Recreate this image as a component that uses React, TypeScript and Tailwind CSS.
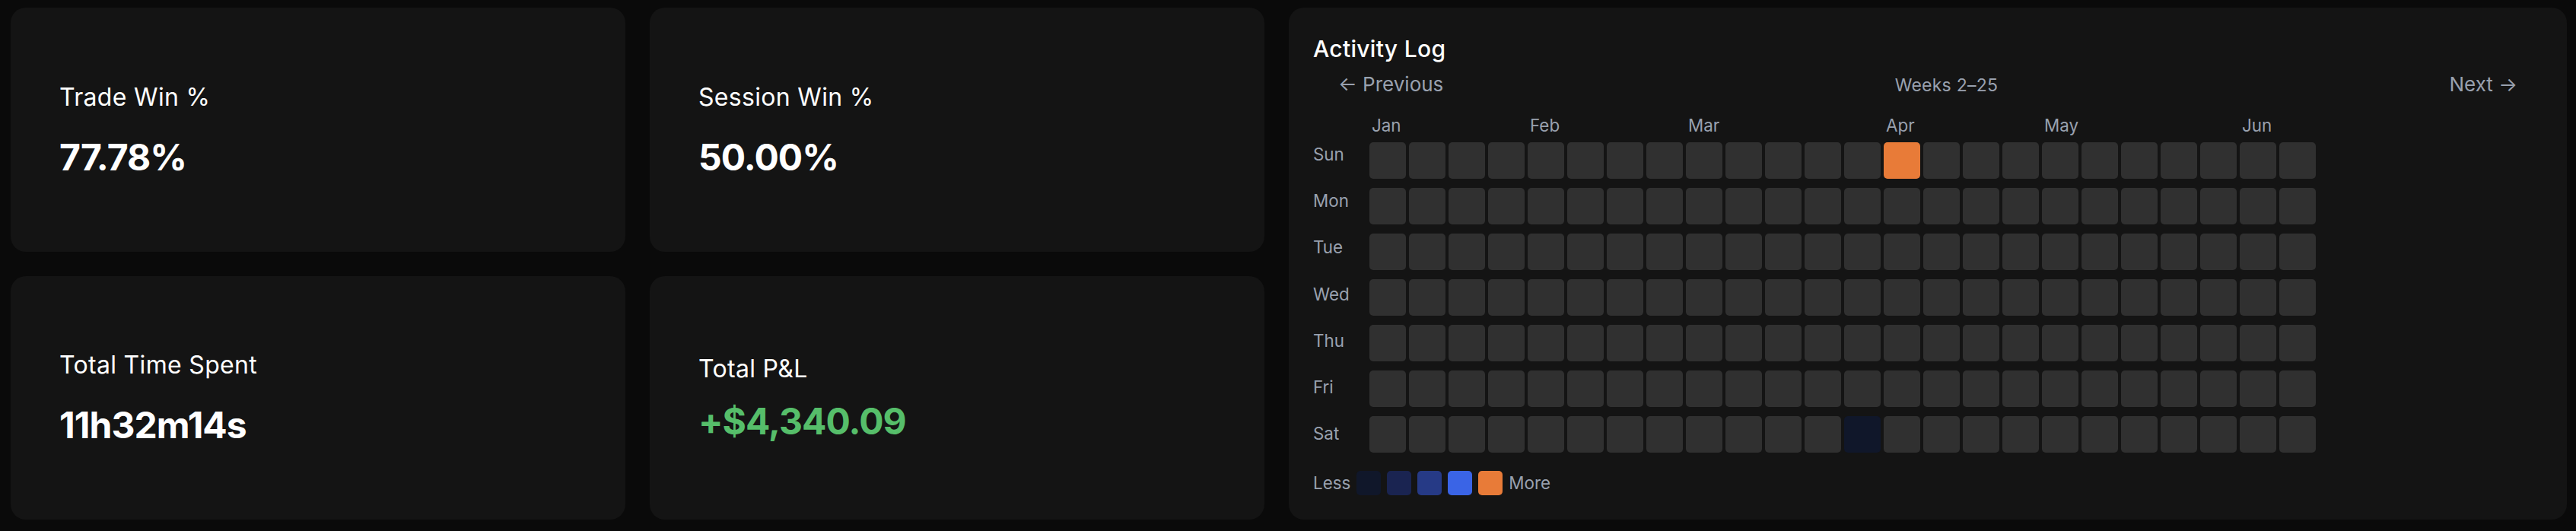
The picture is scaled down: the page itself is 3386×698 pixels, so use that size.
import React from "react";
import clsx from "clsx";

const WEEKS = Array.from({ length: 24 }, (_, i) => i + 2);
const DAYS = ["Sun", "Mon", "Tue", "Wed", "Thu", "Fri", "Sat"];

const MONTHS = [
  { label: "Jan", className: "col-start-1" },
  { label: "Feb", className: "col-start-5" },
  { label: "Mar", className: "col-start-9" },
  { label: "Apr", className: "col-start-14" },
  { label: "May", className: "col-start-18" },
  { label: "Jun", className: "col-start-23" },
];

const LEVELS = [
  "bg-[#10172a]",
  "bg-[#1a2451]",
  "bg-[#263a86]",
  "bg-[#3a64e6]",
  "bg-[#e87b38]",
];

// day index - week index -> level
const ACTIVITY: Record<string, number> = { "0-13": 4, "6-12": 0 };

const StatCard = ({
  title,
  value,
  valueClass,
  tight,
}: {
  title: string;
  value: string;
  valueClass?: string;
  tight?: boolean;
}) => {
  return (
    <div className="flex flex-col justify-center rounded-[20px] bg-[#141414] px-16">
      <h3 className="text-[32px] leading-[45px] font-normal tracking-[0.01em] text-white">{title}</h3>
      <p
        className={clsx(
          "text-[48px] leading-[58px] font-bold tracking-[-0.02em]",
          tight ? "mt-[18px]" : "mt-[28px]",
          valueClass ?? "text-white"
        )}
      >
        {value}
      </p>
    </div>
  );
};

const ActivityLog = () => {
  return (
    <div className="flex-1 rounded-[20px] bg-[#141414] p-8">
      <h2 className="text-[30px] leading-[45px] font-medium tracking-[0.01em] text-white">Activity Log</h2>
      <div className="mt-[5px] flex items-baseline justify-between px-[33px] text-gray-400">
        <button className="text-[26px] leading-[38px]">← Previous</button>
        <span className="text-[23px] leading-[38px] tracking-[0.01em]">Weeks 2–25</span>
        <button className="text-[26px] leading-[38px]">Next →</button>
      </div>

      <div className="mt-[18px] flex">
        <div className="w-[74px] shrink-0" />
        <div className="grid grid-cols-[repeat(24,48px)] gap-x-[4px] text-[22.4px] leading-[32px] text-gray-400">
          {MONTHS.map((m) => (
            <span key={m.label} className={clsx("col-span-4 whitespace-nowrap pl-[3px]", m.className)}>
              {m.label}
            </span>
          ))}
        </div>
      </div>

      <div className="mt-[6px] flex">
        <div className="flex w-[74px] shrink-0 flex-col gap-y-[29.2px] text-[22.4px] leading-[32px] text-gray-400">
          {DAYS.map((day) => (
            <span key={day}>{day}</span>
          ))}
        </div>
        <div className="flex flex-col gap-y-[12px]">
          {DAYS.map((day, di) => (
            <div key={day} className="flex gap-x-[4px]">
              {WEEKS.map((week, wi) => {
                const level = ACTIVITY[`${di}-${wi}`];
                return (
                  <div
                    key={week}
                    className={clsx(
                      "h-[48px] w-[48px] rounded-[5px]",
                      level === undefined ? "bg-[#303030]" : LEVELS[level]
                    )}
                  />
                );
              })}
            </div>
          ))}
        </div>
      </div>

      <div className="mt-[24px] flex items-center gap-[8px] text-[22.4px] leading-[32px] text-gray-400">
        <span>Less</span>
        {LEVELS.map((c) => (
          <div key={c} className={clsx("h-[32px] w-[32px] rounded-[5px]", c)} />
        ))}
        <span>More</span>
      </div>
    </div>
  );
};

export default function App() {
  return (
    <div className="min-h-screen bg-[#0a0a0a] pt-[10px] pr-[12px] pb-[15px] pl-[14px] font-[Inter,sans-serif]">
      <div className="flex gap-8">
        <div className="grid w-[1648px] shrink-0 grid-cols-2 grid-rows-2 gap-8">
          <StatCard title="Trade Win %" value="77.78%" />
          <StatCard title="Session Win %" value="50.00%" />
          <StatCard title="Total Time Spent" value="11h32m14s" />
          <StatCard title="Total P&L" value="+$4,340.09" valueClass="text-[#56be6a]" tight />
        </div>
        <ActivityLog />
      </div>
    </div>
  );
}
